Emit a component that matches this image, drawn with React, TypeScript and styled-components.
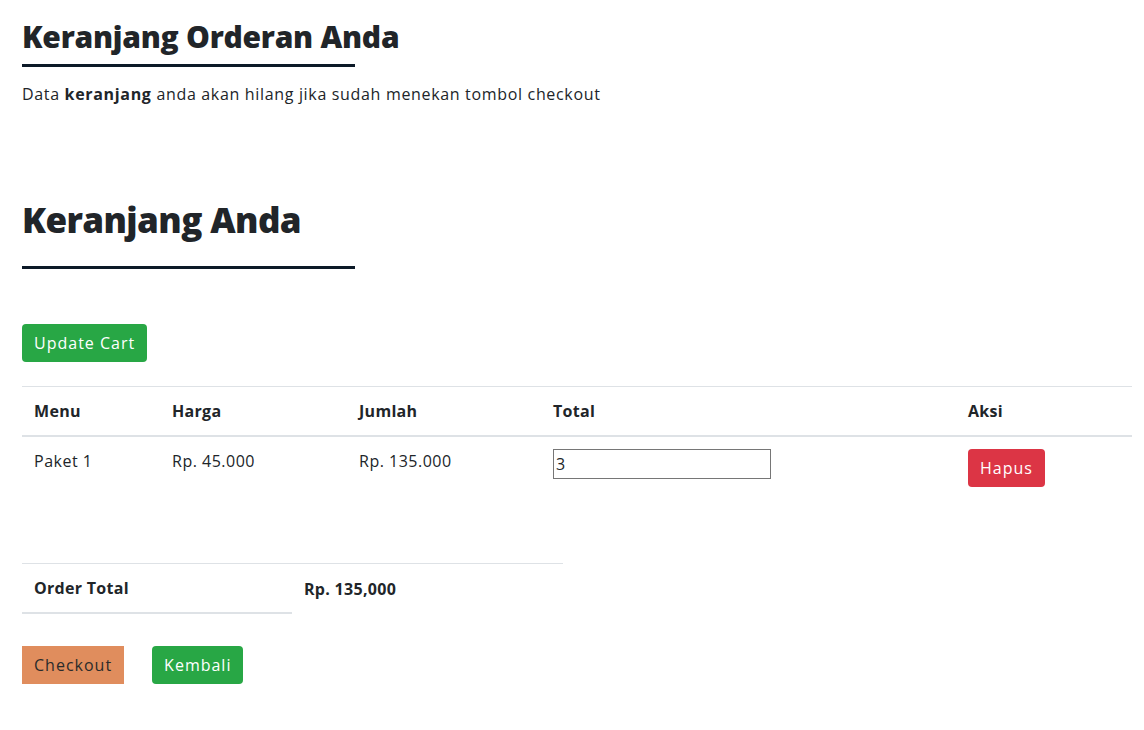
import { createGlobalStyle, styled } from 'styled-components';

const GlobalStyle = createGlobalStyle`
  body {
    margin: 0;
    background: #ffffff;
    color: #212529;
    font-family: 'Open Sans', 'DejaVu Sans', sans-serif;
    font-size: 16px;
    line-height: 24px;
  }
  * {
    box-sizing: border-box;
  }
`;

const cartItems = [{ menu: 'Paket 1', harga: 'Rp. 45.000', jumlah: 'Rp. 135.000', qty: '3' }];

export default function App(): JSX.Element {
  return (
    <>
      <GlobalStyle />
      <Page>
        <Title>Keranjang Orderan Anda</Title>
        <Underline />
        <Intro>
          Data <strong>keranjang</strong> anda akan hilang jika sudah menekan tombol
          checkout
        </Intro>

        <SectionTitle>Keranjang Anda</SectionTitle>
        <Underline />

        <Button $variant="success" $top={55}>
          Update Cart
        </Button>

        <CartTable>
          <colgroup>
            <col style={{ width: 138 }} />
            <col style={{ width: 187 }} />
            <col style={{ width: 194 }} />
            <col style={{ width: 415 }} />
            <col style={{ width: 176 }} />
          </colgroup>
          <thead>
            <tr>
              <Th>Menu</Th>
              <Th>Harga</Th>
              <Th>Jumlah</Th>
              <Th>Total</Th>
              <Th>Aksi</Th>
            </tr>
          </thead>
          <tbody>
            {cartItems.map((item) => (
              <tr key={item.menu}>
                <Td>{item.menu}</Td>
                <Td>{item.harga}</Td>
                <Td>{item.jumlah}</Td>
                <Td>
                  <QtyInput type="text" defaultValue={item.qty} />
                </Td>
                <Td>
                  <Button $variant="danger">Hapus</Button>
                </Td>
              </tr>
            ))}
          </tbody>
        </CartTable>

        <TotalTable>
          <tbody>
            <tr>
              <TotalLabel>Order Total</TotalLabel>
              <TotalValue>Rp. 135,000</TotalValue>
            </tr>
          </tbody>
        </TotalTable>

        <Actions>
          <Button $variant="checkout">Checkout</Button>
          <Button $variant="success">Kembali</Button>
        </Actions>
      </Page>
    </>
  );
}

const Page = styled.div`
  width: 1110px;
  margin-left: 22px;
  padding-top: 19px;
  padding-bottom: 40px;
`;

const Title = styled.h1`
  margin: 0;
  font-size: 30px;
  line-height: 36px;
  font-weight: 800;
  letter-spacing: -0.25px;
  color: #212529;
`;

const SectionTitle = styled.h2`
  margin: 93px 0 0 0;
  font-size: 35px;
  line-height: 42px;
  font-weight: 800;
  letter-spacing: -0.6px;
  color: #212529;
`;

const Underline = styled.div`
  width: 333px;
  height: 3px;
  margin-top: 9px;
  background: #0c1a28;

  ${SectionTitle} + & {
    margin-top: 25px;
  }
`;

const Intro = styled.p`
  margin: 15px 0 0 0;
  font-weight: 400;
  letter-spacing: 0.67px;

  strong {
    font-weight: 700;
  }
`;

const variants = {
  success: { bg: '#28a745', fg: '#ffffff', radius: '4px' },
  danger: { bg: '#dc3545', fg: '#ffffff', radius: '4px' },
  checkout: { bg: '#e08d5d', fg: '#2b2b2b', radius: '0' },
};

const Button = styled.button<{ $variant: keyof typeof variants; $top?: number }>`
  display: inline-block;
  height: 38px;
  margin-top: ${(p) => p.$top ?? 0}px;
  padding: 0 12px;
  border: none;
  border-radius: ${(p) => variants[p.$variant].radius};
  background: ${(p) => variants[p.$variant].bg};
  color: ${(p) => variants[p.$variant].fg};
  font-family: inherit;
  font-size: 16px;
  line-height: 24px;
  letter-spacing: 1px;
  cursor: pointer;
`;

const CartTable = styled.table`
  width: 1110px;
  margin-top: 24px;
  border-collapse: collapse;
  table-layout: fixed;
`;

const Th = styled.th`
  padding: 12px;
  text-align: left;
  font-weight: 700;
  letter-spacing: 0.3px;
  border-top: 1px solid #dee2e6;
  border-bottom: 2px solid #dee2e6;
  vertical-align: top;
`;

const Td = styled.td`
  padding: 12px;
  text-align: left;
  vertical-align: top;
  letter-spacing: 0.5px;
  height: 62px;
`;

const QtyInput = styled.input`
  display: block;
  width: 218px;
  height: 30px;
  padding: 1px 2px;
  border: 1px solid #767676;
  border-radius: 0;
  font-family: inherit;
  font-size: 16px;
  color: #212529;
`;

const TotalTable = styled.table`
  width: 541px;
  margin-top: 64px;
  border-collapse: collapse;
  table-layout: fixed;
  border-top: 1px solid #dee2e6;
`;

const TotalLabel = styled.th`
  width: 270px;
  padding: 12px;
  text-align: left;
  font-weight: 700;
  letter-spacing: 0.3px;
  border-bottom: 2px solid #dee2e6;
`;

const TotalValue = styled.td`
  padding: 12px;
  text-align: left;
  font-weight: 700;
  letter-spacing: 0.3px;
`;

const Actions = styled.div`
  display: flex;
  gap: 28px;
  margin-top: 32px;
`;
